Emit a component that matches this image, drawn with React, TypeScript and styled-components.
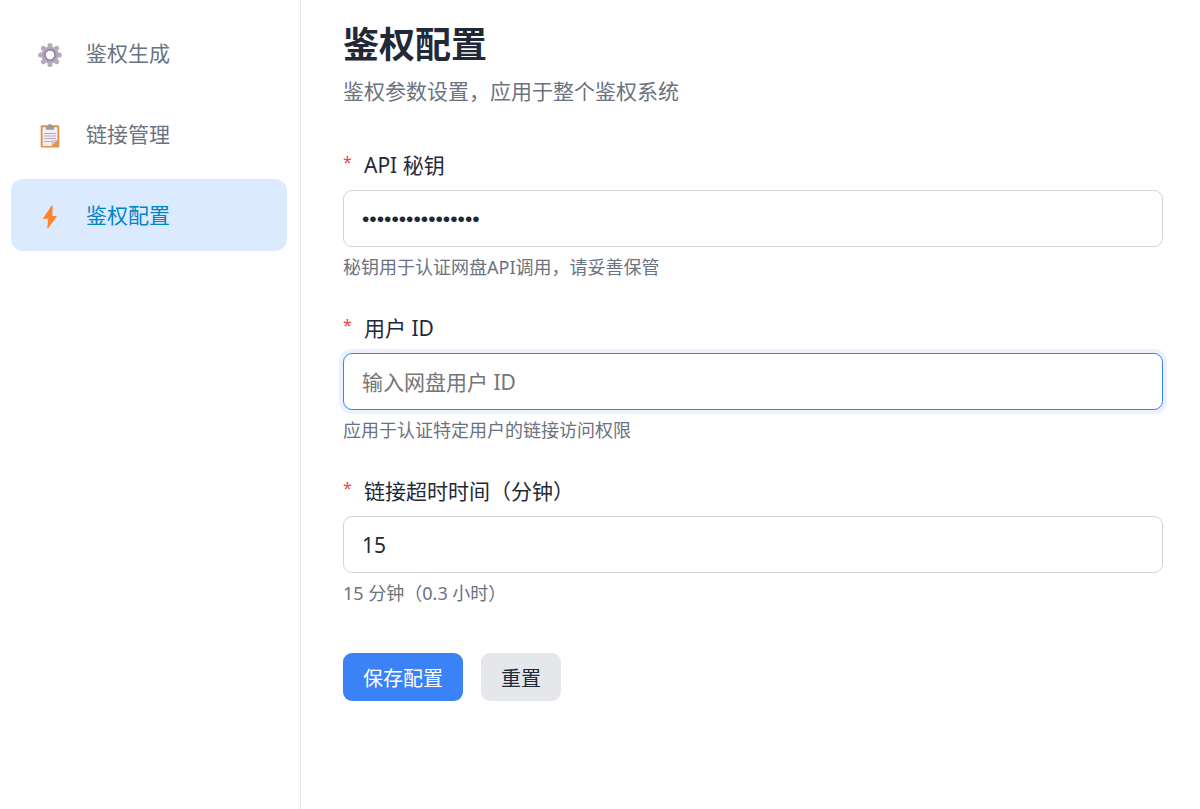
import React, { useState } from "react";
import styled, { createGlobalStyle } from "styled-components";

const GlobalStyle = createGlobalStyle`
  *, *::before, *::after { box-sizing: border-box; }
  body {
    margin: 0;
    background: #fff;
    color: #1f2937;
    font-family: "Noto Sans", "Noto Sans CJK SC", sans-serif;
    font-size: 21px;
    line-height: 32px;
  }
`;

const Layout = styled.div`
  display: flex;
  min-height: 100vh;
`;

const Sidebar = styled.nav`
  flex: 0 0 301px;
  display: flex;
  flex-direction: column;
  gap: 9px;
  padding: 17px 13px 17px 11px;
  border-right: 1px solid #e5e7eb;
`;

const NavItem = styled.a<{ $active?: boolean }>`
  display: flex;
  align-items: center;
  gap: 24px;
  height: 72px;
  padding: 0 27px;
  border-radius: 12px;
  background: ${(p) => (p.$active ? "#dbeafe" : "transparent")};
  color: ${(p) => (p.$active ? "#0284c7" : "#6b7280")};
  text-decoration: none;
`;

const NavIcon = styled.svg`
  flex: none;
  width: 24px;
  height: 27px;
`;

const Main = styled.main`
  flex: 1;
  min-width: 0;
  padding: 18px 37px 36px 42px;
`;

const Title = styled.h1`
  margin: 0;
  font-size: 36px;
  line-height: 54px;
  font-weight: 700;
`;

const Subtitle = styled.p`
  margin: 3px 0 42px;
  color: #6b7280;
`;

const Form = styled.form`
  display: flex;
  flex-direction: column;
`;

const Field = styled.div`
  display: flex;
  flex-direction: column;
  margin-bottom: 31px;
`;

const Label = styled.label`
  display: flex;
  gap: 12px;
  margin-bottom: 9px;
`;

const Required = styled.span`
  width: 9px;
  color: #ef4444;
  font-size: 16px;
  line-height: 27px;
`;

const Input = styled.input`
  width: 100%;
  height: 57px;
  padding: 0 18px;
  border: 1px solid #d1d5db;
  border-radius: 9px;
  outline: none;
  background: #fff;
  color: #1f2937;
  font: inherit;

  &[type="password"] { font-family: "Liberation Sans", sans-serif; }
  &::placeholder { color: #757575; }
  &:focus {
    border-color: #3b82f6;
    box-shadow: 0 0 0 4px rgba(59, 130, 246, 0.1);
  }
`;

const Hint = styled.p`
  margin: 7px 0 0;
  color: #6b7280;
  font-size: 18px;
  line-height: 27px;
`;

const Actions = styled.div`
  display: flex;
  gap: 18px;
  margin-top: 15px;
`;

const Button = styled.button<{ $primary?: boolean }>`
  height: 48px;
  padding: 0 20px;
  border: 0;
  border-radius: 9px;
  background: ${(p) => (p.$primary ? "#3b82f6" : "#e5e7eb")};
  color: ${(p) => (p.$primary ? "#fff" : "#1f2937")};
  font-family: inherit;
  font-size: 20px;
  cursor: pointer;
`;

const GearIcon = () => (
  <NavIcon viewBox="0 -3 24 27" aria-hidden="true">
    <g stroke="#b4acbc" strokeWidth="5" strokeLinecap="round">
      <path d="M12 2.600v18.800M2.600 12h18.800M5.300 5.300l13.400 13.400M18.700 5.300L5.300 18.700" />
    </g>
    <circle cx="12" cy="12" r="8.600" fill="#b4acbc" />
    <circle cx="12" cy="12" r="5.300" fill="#fff" stroke="#998ea4" strokeWidth="2.200" />
  </NavIcon>
);

const ClipboardIcon = () => (
  <NavIcon viewBox="0 -3 24 27" aria-hidden="true">
    <rect x="2.700" y="1.200" width="18.600" height="22.400" rx="1.200" fill="#e39248" />
    <path d="M4.600 3.200h14.800v12.800l-6 6H4.600z" fill="#f3eef8" />
    <path d="M19.400 16h-4.600a1.400 1.400 0 0 0-1.400 1.400V22z" fill="#cdc4d6" />
    <path d="M7.800 2H10a2 2 0 0 1 4 0h2.200v2.800a1 1 0 0 1-1 1H8.800a1 1 0 0 1-1-1z" fill="#9b9b9b" />
    <path d="M6 9.500h12M6 12h12M6 14.500h12M6 17.500h7.500" stroke="#b4acbc" strokeWidth="1" />
  </NavIcon>
);

const BoltIcon = () => (
  <NavIcon viewBox="0 -3 24 27" aria-hidden="true">
    <path
      d="M13.600.7L5.200 13.100c-.2.300 0 .6.300.6h4.700l-.9 9.300c0 .5.500.6.800.2l8.600-11.600c.2-.3 0-.7-.4-.7h-3.900l.2-9.900c0-.5-.7-.7-1-.3z"
      fill="#ff822d"
    />
  </NavIcon>
);

export default function App() {
  const [apiKey, setApiKey] = useState("a1b2c3d4e5f6g7h8");
  const [userId, setUserId] = useState("");
  const [minutes, setMinutes] = useState("15");
  const hours = (Math.round((Number(minutes) / 60) * 10) / 10).toFixed(1);

  return (
    <>
      <GlobalStyle />
      <Layout>
        <Sidebar>
          <NavItem href="#generate">
            <GearIcon />
            鉴权生成
          </NavItem>
          <NavItem href="#links">
            <ClipboardIcon />
            链接管理
          </NavItem>
          <NavItem href="#config" $active aria-current="page">
            <BoltIcon />
            鉴权配置
          </NavItem>
        </Sidebar>
        <Main>
          <Title>鉴权配置</Title>
          <Subtitle>鉴权参数设置，应用于整个鉴权系统</Subtitle>
          <Form onSubmit={(e) => e.preventDefault()}>
            <Field>
              <Label htmlFor="api-key">
                <Required>*</Required>
                API 秘钥
              </Label>
              <Input
                id="api-key"
                type="password"
                value={apiKey}
                onChange={(e) => setApiKey(e.target.value)}
              />
              <Hint>秘钥用于认证网盘API调用，请妥善保管</Hint>
            </Field>
            <Field>
              <Label htmlFor="user-id">
                <Required>*</Required>
                用户 ID
              </Label>
              <Input
                id="user-id"
                type="text"
                autoFocus
                placeholder="输入网盘用户 ID"
                value={userId}
                onChange={(e) => setUserId(e.target.value)}
              />
              <Hint>应用于认证特定用户的链接访问权限</Hint>
            </Field>
            <Field>
              <Label htmlFor="timeout">
                <Required>*</Required>
                链接超时时间（分钟）
              </Label>
              <Input
                id="timeout"
                type="number"
                value={minutes}
                onChange={(e) => setMinutes(e.target.value)}
              />
              <Hint>{`${minutes} 分钟（${hours} 小时）`}</Hint>
            </Field>
            <Actions>
              <Button type="submit" $primary>保存配置</Button>
              <Button type="button">重置</Button>
            </Actions>
          </Form>
        </Main>
      </Layout>
    </>
  );
}
